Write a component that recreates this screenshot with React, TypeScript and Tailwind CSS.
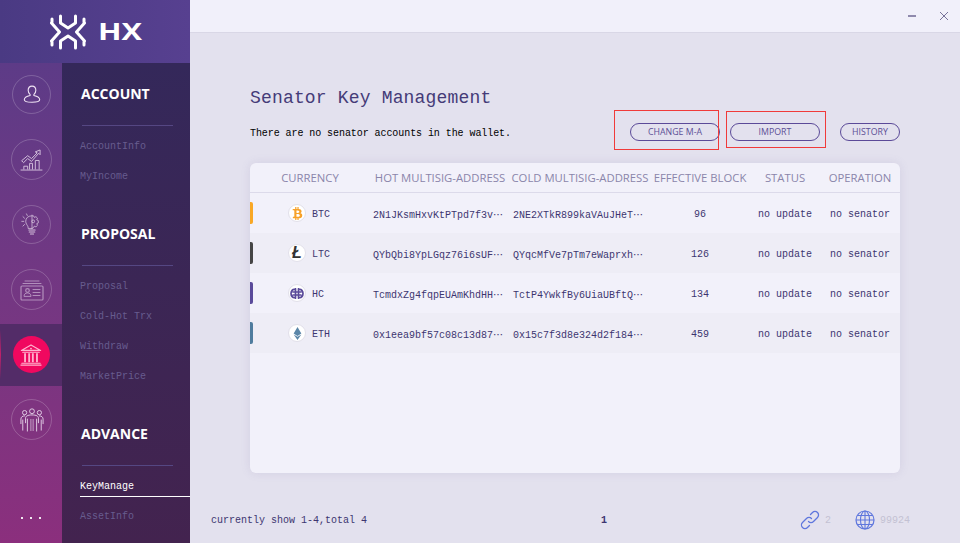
import type { ReactNode } from 'react'
import { FaBtc, FaEthereum } from 'react-icons/fa'

const mono = "font-['Liberation_Mono',monospace]"
const sans = "font-['Open_Sans',sans-serif]"

const GRID = 'grid grid-cols-[120px_140px_140px_100px_70px_80px]'

const NAV = [
  { title: 'ACCOUNT', items: ['AccountInfo', 'MyIncome'] },
  { title: 'PROPOSAL', items: ['Proposal', 'Cold-Hot Trx', 'Withdraw', 'MarketPrice'] },
  { title: 'ADVANCE', items: ['KeyManage', 'AssetInfo'] },
]

const HEADERS = ['CURRENCY', 'HOT MULTISIG-ADDRESS', 'COLD MULTISIG-ADDRESS', 'EFFECTIVE BLOCK', 'STATUS', 'OPERATION']

const ROWS = [
  { coin: 'BTC', bar: 'bg-[#f9a825]', hot: '2N1JKsmHxvKtPTpd7f3v', cold: '2NE2XTkR899kaVAuJHeT', block: 96 },
  { coin: 'LTC', bar: 'bg-[#454545]', hot: 'QYbQbi8YpLGqz76i6sUF', cold: 'QYqcMfVe7pTm7eWaprxh', block: 126 },
  { coin: 'HC', bar: 'bg-[#5a4a9a]', hot: 'TcmdxZg4fqpEUAmKhdHH', cold: 'TctP4YwkfBy6UiaUBftQ', block: 134 },
  { coin: 'ETH', bar: 'bg-[#4f7c9e]', hot: '0x1eea9bf57c08c13d87', cold: '0x15c7f3d8e324d2f184', block: 459 },
]

function Line({ d, w = 1 }: { d: string; w?: number }) {
  return <path d={d} fill="none" stroke="currentColor" strokeWidth={w} strokeLinecap="round" strokeLinejoin="round" />
}

function PersonIcon() {
  return (
    <svg width="20" height="22" viewBox="0 0 26 28">
      <Line w={1.400} d="M13 2.500c3 0 5 2.300 5 5.400 0 2.600-1.200 4.400-2.600 5.600v1.200c2.600.5 7.600 1.600 7.600 5.600 0 2.400-3.400 3.200-10 3.200s-10-.8-10-3.200c0-4 5-5.100 7.600-5.600v-1.200C9.200 12.300 8 10.500 8 7.900c0-3.100 2-5.400 5-5.400z" />
    </svg>
  )
}

function ChartIcon() {
  return (
    <svg width="23" height="22" viewBox="0 0 24 23" className="opacity-80">
      <Line d="M1 22h22" />
      <Line d="M4 21v-3h4v3M10 21v-6h3v6M16 21v-9h4v9" />
      <Line d="M2 12l6-5 4 3 6-6-2-1 5-2v5l-1.500-1.500L12 13l-4-3-4 4z" />
    </svg>
  )
}

function BulbIcon() {
  return (
    <svg width="22" height="25" viewBox="0 0 28 30" className="opacity-80">
      <Line d="M13 4c-4 0-7 3-7 7 0 3 2 4.500 3 7v2h5" />
      <Line d="M14 3v17" />
      <Line d="M14 4l2 0 1 2 2-1 2 2-1 2 2 1v3l-2 1 1 2-2 2-2-1-1 2-2 1" />
      <circle cx="15.500" cy="11" r="1.800" fill="none" stroke="currentColor" strokeWidth="1" />
      <Line d="M10 22h8M10.500 24.500h7M12 27h4" w={1.400} />
      <Line d="M1 11h2.500M2.500 5l2 2M2.500 17l2-2M7 1.500l1 2" />
    </svg>
  )
}

function CardIcon() {
  return (
    <svg width="24" height="22" viewBox="0 0 24 22" className="opacity-50">
      <Line d="M5 2h14M3 4.500h18" />
      <rect x="1" y="7" width="22" height="14" rx="1" fill="none" stroke="currentColor" strokeWidth="1.200" />
      <circle cx="7.500" cy="11.500" r="1.800" fill="none" stroke="currentColor" strokeWidth="1.200" />
      <Line d="M4 17c0-2 1.500-3 3.500-3s3.500 1 3.500 3zM13 10.500h7M13 13.500h7M13 16.500h7" />
    </svg>
  )
}

function BankIcon() {
  return (
    <svg width="22" height="24" viewBox="0 0 24 24" className="text-[#ffb3ce]">
      <Line d="M12 1L1.500 7h21zM3 9h18M2 21h20M1 23h22" w={1.300} />
      <circle cx="12" cy="5" r="1" fill="currentColor" />
      <path d="M4.500 10h2v10h-2zM9 10h2v10H9zM13 10h2v10h-2zM17.500 10h2v10h-2z" fill="currentColor" />
    </svg>
  )
}

function TeamIcon() {
  return (
    <svg width="24" height="26" viewBox="0 0 26 26" className="opacity-90">
      <circle cx="5" cy="5" r="2.300" fill="none" stroke="currentColor" strokeWidth="1" />
      <circle cx="13" cy="3.500" r="2.600" fill="none" stroke="currentColor" strokeWidth="1" />
      <circle cx="21" cy="5" r="2.300" fill="none" stroke="currentColor" strokeWidth="1" />
      <Line d="M1 17v-5c0-2 1.500-3.500 4-3.500M25 17v-5c0-2-1.500-3.500-4-3.500M3 13v11M23 13v11" />
      <Line d="M6 16v-5c0-2 2-3.500 7-3.500s7 1.500 7 3.500v5M8 12v13M18 12v13" />
      <path d="M11 12h1.500v13H11zM13.500 12H15v13h-1.500z" fill="currentColor" opacity="0.500" />
    </svg>
  )
}

function NavCircle({ children, size = 'h-[39px] w-[39px]' }: { children: ReactNode; size?: string }) {
  return (
    <div className="flex h-[65px] items-center justify-center">
      <div className={`ml-px flex items-center justify-center rounded-full border border-white/20 text-[#f0e4f4] ${size}`}>{children}</div>
    </div>
  )
}

function ActiveCircle({ children }: { children: ReactNode }) {
  return (
    <div className="relative flex h-[65px] items-center">
      <div className="flex h-[62px] w-full items-center justify-center bg-[#532c68]">
        <div className="flex h-[37px] w-[37px] items-center justify-center rounded-full bg-[#f0085f]">{children}</div>
      </div>
      <div className="absolute left-0 top-[8px] h-[49px] w-px bg-linear-to-b from-transparent via-[#c0206a] to-transparent" />
    </div>
  )
}

function HcIcon() {
  return (
    <svg width="14" height="11" viewBox="0 0 14 11" className="text-[#5a4a9a]">
      <Line w={1.700} d="M5 1.500C2.500 1 1 3 1 5.500S2.500 10 5 9.500M9 1.500C11.500 1 13 3 13 5.500S11.500 10 9 9.500M5.500 .8v9.400M8.500 .8v9.400M3 4h8M3 7h8" />
    </svg>
  )
}

function CoinIcon({ coin }: { coin: string }) {
  return (
    <div className="flex h-[18px] w-[18px] shrink-0 items-center justify-center rounded-full border border-[#e2e0ea] bg-white">
      {coin === 'BTC' && <FaBtc className="text-[13px] text-[#f7a128]" />}
      {coin === 'LTC' && <span className="font-['Liberation_Sans',sans-serif] text-[16px] font-bold italic leading-none text-[#333]">Ł</span>}
      {coin === 'HC' && <HcIcon />}
      {coin === 'ETH' && <FaEthereum className="text-[13px] text-[#5b86a8]" />}
    </div>
  )
}

function PillButton({ label, w, children }: { label: string; w: string; children?: ReactNode }) {
  return (
    <div className={`relative ${w}`}>
      <button className={`flex h-[18px] w-full items-center justify-center rounded-full border border-[#5b4a98] pt-[2px] text-[8.800px] text-[#5b4f96] ${sans}`}>
        {label}
      </button>
      {children}
    </div>
  )
}

function Dots() {
  return <span className="h-[2px] w-[2px] bg-white/90" />
}

function Ellipsis() {
  return <span className="inline-block translate-y-[1px] font-['Noto_Sans_CJK_SC',sans-serif]">⋯</span>
}

export default function App() {
  return (
    <div className="flex h-[543px] w-[960px] overflow-hidden bg-[#e3e1ee]">
      {/* Sidebar */}
      <div className="flex w-[190px] shrink-0 flex-col">
        <div className="flex h-[63px] shrink-0 items-center bg-linear-to-r from-[#4a3a83] to-[#574090] pl-[50px]">
          <svg width="94" height="36" viewBox="0 0 94 36" className="text-white">
            <Line w={3} d="M10.500 2v7l7.500 5 7.500-5V2" />
            <Line w={3} d="M10.500 34v-7l7.500-5 7.500 5v7" />
            <Line w={3} d="M1.500 9l8 9-8 9M34.500 9l-8 9 8 9" />
            <Line w={3} d="M2 5v3M34 5v3M2 28v3M34 28v3" />
            <text x="48" y="26" textLength="44" lengthAdjust="spacingAndGlyphs" fill="currentColor" fontFamily="Open Sans" fontWeight="700" fontSize="24">HX</text>
          </svg>
        </div>
        <div className="flex flex-1">
          <div className="flex w-[62px] shrink-0 flex-col bg-linear-to-b from-[#5d3b87] to-[#8b2f7d]">
            <div className="-mt-px">
              <NavCircle><PersonIcon /></NavCircle>
              <NavCircle size="h-[41px] w-[41px]"><ChartIcon /></NavCircle>
              <NavCircle><BulbIcon /></NavCircle>
              <NavCircle size="h-[41px] w-[41px]"><CardIcon /></NavCircle>
              <ActiveCircle><BankIcon /></ActiveCircle>
              <NavCircle size="h-[41px] w-[41px]"><TeamIcon /></NavCircle>
            </div>
            <div className="mt-[65px] flex justify-center gap-[7px] pr-px">
              <Dots />
              <Dots />
              <Dots />
            </div>
          </div>
          <div className="flex-1 bg-linear-to-b from-[#34285a] to-[#43234f]">
            {NAV.map((section) => (
              <div key={section.title} className="mb-[13px]">
                <div className="ml-[20px] mr-[17px] flex h-[63px] items-center border-b border-[#554783] pb-[2px]">
                  <span className={`-ml-px text-[14px] font-bold text-white ${sans}`}>{section.title}</span>
                </div>
                <div className={`mt-[4px] pl-[18px] text-[10px] ${mono}`}>
                  {section.items.map((item) =>
                    item === 'KeyManage' ? (
                      <div key={item} className="mb-[3px] flex h-[27px] items-center border-b border-white pt-[6px] text-white">{item}</div>
                    ) : (
                      <div key={item} className="flex h-[30px] items-center pt-[2px] text-[#675c8e]">{item}</div>
                    )
                  )}
                </div>
              </div>
            ))}
          </div>
        </div>
      </div>

      {/* Main */}
      <div className="flex flex-1 flex-col">
        <div className="flex h-[33px] shrink-0 items-center justify-end gap-[24px] border-b border-[#d9d7e6] bg-[#f1f0fa] pr-[12px]">
          <svg width="8" height="8" viewBox="0 0 8 8" className="text-[#2e2560]"><path d="M0 4h8" stroke="currentColor" strokeWidth="1" /></svg>
          <svg width="8" height="8" viewBox="0 0 8 8" className="text-[#77729a]"><path d="M0 0l8 8M8 0l-8 8" stroke="currentColor" strokeWidth="1" /></svg>
        </div>

        <div className="px-[60px]">
          <h1 className={`mt-[53px] h-[24px] text-[18px] leading-[24px] tracking-[0.17px] text-[#453b78] ${mono}`}>Senator Key Management</h1>
          <div className="mt-[13px] flex h-[18px] items-center">
            <p className={`pt-[2px] text-[10px] tracking-[-0.07px] text-black ${mono}`}>There are no senator accounts in the wallet.</p>
            <div className="ml-auto flex gap-[10px]">
              <PillButton label="CHANGE M-A" w="w-[90px]">
                <div className="absolute -bottom-[9px] -left-[16px] -top-[13px] right-px border border-[#f03a3a]" />
              </PillButton>
              <PillButton label="IMPORT" w="w-[90px]">
                <div className="absolute -bottom-[7px] -left-[4px] -right-[6px] -top-[12px] border border-[#f03a3a]" />
              </PillButton>
              <div className="ml-[10px]"><PillButton label="HISTORY" w="w-[60px]" /></div>
            </div>
          </div>

          <div className="mt-[22px] h-[310px] overflow-hidden rounded-[6px] bg-[#f2f1fa] shadow-[0_0_10px_rgba(120,110,170,0.15)]">
            <div className={`${GRID} h-[30px] items-center border-b border-[#dcdaea] pt-[2px] text-center text-[11.300px] text-[#8a85aa] ${sans}`}>
              {HEADERS.map((h) => <div key={h} className="whitespace-nowrap">{h}</div>)}
            </div>
            {ROWS.map((row, i) => (
              <div key={row.coin} className={`${GRID} h-[40px] items-center text-[10px] text-[#3d3670] ${mono} ${i % 2 ? 'bg-[#eeedf6]' : ''}`}>
                <div className="flex items-center">
                  <div className={`h-[22px] w-[3px] rounded-r-[2px] ${row.bar}`} />
                  <div className="ml-[35px]"><CoinIcon coin={row.coin} /></div>
                  <span className="ml-[6px] pt-[2px]">{row.coin}</span>
                </div>
                <div className="whitespace-nowrap pl-[3px] pt-[2px]">{row.hot}<Ellipsis /></div>
                <div className="whitespace-nowrap pl-[3px] pt-[2px]">{row.cold}<Ellipsis /></div>
                <div className="pt-[2px] text-center">{row.block}</div>
                <div className="pt-[2px] text-center">no update</div>
                <div className="pt-[2px] text-center">no senator</div>
              </div>
            ))}
          </div>
        </div>

        <div className="mt-[37px] flex h-[20px] items-center pl-[21px] pr-[50px]">
          <span className={`w-[390px] text-[10px] text-[#3d3670] ${mono}`}>currently show 1-4,total 4</span>
          <span className={`text-[10px] font-bold text-[#3d3670] ${mono}`}>1</span>
          <div className={`ml-auto flex items-center text-[10px] text-[#c3c1d3] ${mono}`}>
            <svg width="20" height="20" viewBox="0 0 20 20" className="text-[#5f77dd]">
              <Line w={1.300} d="M8.500 11.500a3.500 3.500 0 0 0 5 0l4-4a3.500 3.500 0 0 0-5-5l-2 2" />
              <Line w={1.300} d="M11.500 8.500a3.500 3.500 0 0 0-5 0l-4 4a3.500 3.500 0 0 0 5 5l2-2" />
            </svg>
            <span className="ml-[5px]">2</span>
            <svg width="20" height="20" viewBox="0 0 20 20" className="ml-[24px] text-[#5f77dd]">
              <circle cx="10" cy="10" r="9" fill="none" stroke="currentColor" strokeWidth="1.200" />
              <ellipse cx="10" cy="10" rx="4.500" ry="9" fill="none" stroke="currentColor" strokeWidth="1.100" />
              <path d="M10 1v18M1 10h18M2.500 5.500h15M2.500 14.500h15" stroke="currentColor" strokeWidth="1.100" />
            </svg>
            <span className="ml-[5px]">99924</span>
          </div>
        </div>
      </div>
    </div>
  )
}
